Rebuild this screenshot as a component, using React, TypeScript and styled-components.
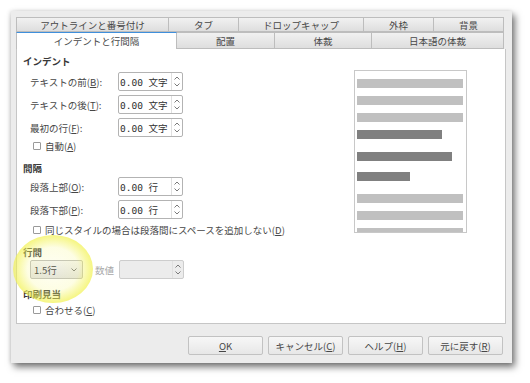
import React from "react";
import styled, { createGlobalStyle } from "styled-components";

const GlobalStyle = createGlobalStyle`
    html, body {
        margin: 0;
        background: #ffffff;
        font-family: "Noto Sans CJK JP", "Noto Sans", sans-serif;
        font-size: 9.5px;
        color: #444444;
    }
`;

const Page = styled.div`
    position: relative;
    width: 530px;
    height: 383px;
    padding: 11px 0 0 11px;
    box-sizing: border-box;
`;

const Window = styled.div`
    width: 501px;
    height: 352px;
    box-sizing: border-box;
    padding: 6px 6px 0 5px;
    background: #ececec;
    display: flex;
    flex-direction: column;
    box-shadow: 3px 4px 7px rgba(0, 0, 0, 0.55), -1px 0 4px rgba(0, 0, 0, 0.12);
`;

const TabRow = styled.div`
    display: flex;
    padding-right: 2px;
`;

const Tab = styled.div<{ $w: number; $active?: boolean; $h: number }>`
    width: ${(p) => p.$w}px;
    height: ${(p) => p.$h}px;
    box-sizing: border-box;
    display: flex;
    align-items: center;
    justify-content: center;
    color: #474747;
    white-space: nowrap;
    border: 1px solid #bdbdbd;
    border-left: none;
    background: ${(p) =>
        p.$active ? "#ffffff" : "linear-gradient(#f1f1f1, #dedede)"};
    ${(p) => p.$active && "border-top: 1px solid #3f8fdc; border-bottom: none;"}
    &:first-child {
        border-left: 1px solid #bdbdbd;
    }
`;

const Panel = styled.div`
    height: 275px;
    box-sizing: border-box;
    background: #ffffff;
    border: 1px solid #c6c6c6;
    border-top: none;
    display: flex;
`;

const FormCol = styled.div`
    flex: 1;
    padding: 5px 0 0 6px;
    display: flex;
    flex-direction: column;
`;

const Heading = styled.div<{ $mt: number }>`
    margin-top: ${(p) => p.$mt}px;
    height: 14px;
    line-height: 14px;
    font-weight: bold;
    color: #383838;
`;

const FieldRow = styled.div<{ $mt: number }>`
    margin-top: ${(p) => p.$mt}px;
    height: 19px;
    display: flex;
    align-items: center;
    padding-left: 7px;
`;

const Label = styled.span<{ $w?: number; $dim?: boolean }>`
    width: ${(p) => (p.$w ? `${p.$w}px` : "auto")};
    color: ${(p) => (p.$dim ? "#a8a8a8" : "#464646")};
    white-space: nowrap;
`;

const Spin = styled.div<{ $disabled?: boolean }>`
    width: 65px;
    height: 19px;
    box-sizing: border-box;
    border: 1px solid ${(p) => (p.$disabled ? "#cdcdcd" : "#b3b3b3")};
    border-radius: 2px;
    background: ${(p) => (p.$disabled ? "#ececec" : "#ffffff")};
    display: flex;
    align-items: center;
`;

const SpinValue = styled.span`
    flex: 1;
    padding-left: 1px;
    font-family: "DejaVu Sans Mono", "Noto Sans CJK JP", monospace;
    font-size: 9.5px;
    color: #303030;
    white-space: nowrap;
`;

const SpinArrows = styled.div`
    width: 10px;
    height: 100%;
    border-left: 1px solid #e0e0e0;
    display: flex;
    flex-direction: column;
    align-items: center;
    justify-content: center;
    gap: 3px;
`;

const Select = styled.div`
    width: 53px;
    height: 19px;
    box-sizing: border-box;
    border: 1px solid #bcbcbc;
    border-radius: 2px;
    background: linear-gradient(#f4f4f4, #e2e2e2);
    display: flex;
    align-items: center;
    justify-content: space-between;
    padding: 0 5px 0 3px;
    color: #3a3a3a;
    margin-right: 12px;
`;

const CheckRow = styled.div<{ $mt: number }>`
    margin-top: ${(p) => p.$mt}px;
    height: 14px;
    display: flex;
    align-items: center;
    gap: 4px;
    padding-left: 10px;
    color: #464646;
    white-space: nowrap;
`;

const Box = styled.span`
    width: 8px;
    height: 8px;
    box-sizing: border-box;
    border: 1px solid #9a9a9a;
    border-radius: 1px;
    background: #fff;
`;

const PreviewCol = styled.div`
    padding: 21px 38px 0 0;
`;

const Preview = styled.div`
    width: 113px;
    height: 163px;
    box-sizing: border-box;
    border: 1px solid #c8c8c8;
    padding: 8px 0 0 2px;
    overflow: hidden;
    display: flex;
    flex-direction: column;
`;

const Bar = styled.div<{ $w: number; $mt: number; $dark?: boolean }>`
    flex: none;
    width: ${(p) => p.$w}px;
    height: 9px;
    margin-top: ${(p) => p.$mt}px;
    background: ${(p) => (p.$dark ? "#808080" : "#c0c0c0")};
`;

const ButtonBar = styled.div`
    margin-top: 12px;
    margin-right: 3px;
    display: flex;
    justify-content: flex-end;
    gap: 5px;
`;

const Button = styled.div`
    width: 75px;
    height: 19px;
    box-sizing: border-box;
    border: 1px solid #c2c2c2;
    border-radius: 2px;
    background: linear-gradient(#f7f7f7, #e7e7e7);
    display: flex;
    align-items: center;
    justify-content: center;
    color: #464646;
    white-space: nowrap;
`;

const Highlight = styled.div`
    position: absolute;
    left: 13px;
    top: 235px;
    width: 80px;
    height: 68px;
    border-radius: 50%;
    pointer-events: none;
    background: radial-gradient(
        ellipse at center,
        rgba(250, 250, 170, 0.12) 0%,
        rgba(248, 248, 130, 0.22) 45%,
        rgba(242, 242, 80, 0.7) 70%,
        rgba(242, 242, 80, 0) 100%
    );
`;

const Chevron = ({ up }: { up?: boolean }) => (
    <svg width="6" height="4" viewBox="0 0 6 4">
        <polyline
            points={up ? "0.5,3.5 3,1 5.5,3.5" : "0.5,0.5 3,3 5.5,0.5"}
            fill="none"
            stroke="#7a7a7a"
            strokeWidth="1"
        />
    </svg>
);

const SpinBox = ({ value, disabled }: { value?: string; disabled?: boolean }) => (
    <Spin $disabled={disabled}>
        <SpinValue>{value}</SpinValue>
        <SpinArrows>
            <Chevron up />
            <Chevron />
        </SpinArrows>
    </Spin>
);

const bars = [
    { w: 106, mt: 0 },
    { w: 106, mt: 8 },
    { w: 106, mt: 8 },
    { w: 85, mt: 8, dark: true },
    { w: 95, mt: 13, dark: true },
    { w: 53, mt: 11, dark: true },
    { w: 106, mt: 13 },
    { w: 106, mt: 8 },
    { w: 106, mt: 8 },
];

const App: React.FC = () => {
    return (
        <Page>
            <GlobalStyle />
            <Window>
                <TabRow>
                    <Tab $w={153} $h={15}>アウトラインと番号付け</Tab>
                    <Tab $w={70} $h={15}>タブ</Tab>
                    <Tab $w={125} $h={15}>ドロップキャップ</Tab>
                    <Tab $w={70} $h={15}>外枠</Tab>
                    <Tab $w={70} $h={15}>背景</Tab>
                </TabRow>
                <TabRow>
                    <Tab $w={161} $h={17} $active>インデントと行間隔</Tab>
                    <Tab $w={98} $h={17}>配置</Tab>
                    <Tab $w={97} $h={17}>体裁</Tab>
                    <Tab $w={132} $h={17}>日本語の体裁</Tab>
                </TabRow>
                <Panel>
                    <FormCol>
                        <Heading $mt={0}>インデント</Heading>
                        <FieldRow $mt={4}>
                            <Label $w={88}>テキストの前(<u>B</u>):</Label>
                            <SpinBox value="0.00 文字" />
                        </FieldRow>
                        <FieldRow $mt={4}>
                            <Label $w={88}>テキストの後(<u>T</u>):</Label>
                            <SpinBox value="0.00 文字" />
                        </FieldRow>
                        <FieldRow $mt={4}>
                            <Label $w={88}>最初の行(<u>F</u>):</Label>
                            <SpinBox value="0.00 文字" />
                        </FieldRow>
                        <CheckRow $mt={2}>
                            <Box />
                            <span>自動(<u>A</u>)</span>
                        </CheckRow>

                        <Heading $mt={8}>間隔</Heading>
                        <FieldRow $mt={2}>
                            <Label $w={88}>段落上部(<u>O</u>):</Label>
                            <SpinBox value="0.00 行" />
                        </FieldRow>
                        <FieldRow $mt={4}>
                            <Label $w={88}>段落下部(<u>P</u>):</Label>
                            <SpinBox value="0.00 行" />
                        </FieldRow>
                        <CheckRow $mt={4}>
                            <Box />
                            <span>同じスタイルの場合は段落間にスペースを追加しない(<u>D</u>)</span>
                        </CheckRow>

                        <Heading $mt={8}>行間</Heading>
                        <FieldRow $mt={1}>
                            <Select>
                                <span>1.5行</span>
                                <Chevron />
                            </Select>
                            <Label $w={24} $dim>数値</Label>
                            <SpinBox disabled />
                        </FieldRow>

                        <Heading $mt={8}>印刷見当</Heading>
                        <CheckRow $mt={2}>
                            <Box />
                            <span>合わせる(<u>C</u>)</span>
                        </CheckRow>
                    </FormCol>
                    <PreviewCol>
                        <Preview>
                            {bars.map((b, i) => (
                                <Bar key={i} $w={b.w} $mt={b.mt} $dark={b.dark} />
                            ))}
                        </Preview>
                    </PreviewCol>
                </Panel>
                <ButtonBar>
                    <Button><span><u>O</u>K</span></Button>
                    <Button><span>キャンセル(<u>C</u>)</span></Button>
                    <Button><span>ヘルプ(<u>H</u>)</span></Button>
                    <Button><span>元に戻す(<u>R</u>)</span></Button>
                </ButtonBar>
            </Window>
            <Highlight />
        </Page>
    );
};

export default App;
